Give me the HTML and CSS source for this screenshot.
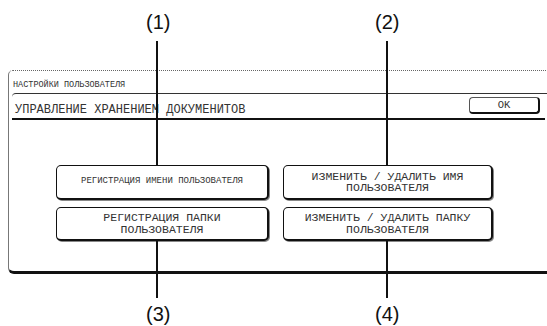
FILE: index.html
```html
<!doctype html>
<html lang="ru">
<head>
    <meta charset="UTF-8">
    <title>Управление хранением документов</title>
    <link rel="stylesheet" href="styles.css">
</head>
<body>
    <div class="figure">
        <div class="panel">
            <div class="panel-title">НАСТРОЙКИ ПОЛЬЗОВАТЕЛЯ</div>
            <div class="panel-body">
                <div class="heading">
                    <span class="heading-text">УПРАВЛЕНИЕ ХРАНЕНИЕМ ДОКУМЕНИТОВ</span>
                    <button class="ok-btn">OK</button>
                </div>
                <div class="keys">
                    <button class="key key-small">РЕГИСТРАЦИЯ ИМЕНИ ПОЛЬЗОВАТЕЛЯ</button>
                    <button class="key">ИЗМЕНИТЬ / УДАЛИТЬ ИМЯ<br>ПОЛЬЗОВАТЕЛЯ</button>
                    <button class="key">РЕГИСТРАЦИЯ ПАПКИ<br>ПОЛЬЗОВАТЕЛЯ</button>
                    <button class="key">ИЗМЕНИТЬ / УДАЛИТЬ ПАПКУ<br>ПОЛЬЗОВАТЕЛЯ</button>
                </div>
            </div>
        </div>

        <!-- выноски -->
        <span class="label label-1">(1)</span>
        <span class="label label-2">(2)</span>
        <span class="label label-3">(3)</span>
        <span class="label label-4">(4)</span>
        <span class="line line-1"></span>
        <span class="line line-2"></span>
        <span class="line line-3"></span>
        <span class="line line-4"></span>
    </div>
</body>
</html>
```

FILE: styles.css
```css
*{
    margin: 0;
    padding: 0;
    box-sizing: border-box;
}
body{
    width: 547px;
    height: 326px;
    overflow: hidden;
    background: #fff;
    color: #333;
    font-family: "Liberation Mono", monospace;
}
.figure{
    position: relative;
    height: 326px;
    padding-top: 70px;
}
.panel{
    margin-left: 8px;
    margin-right: -14px;
    border-top: 1px dotted #666;
    border-left: 1px solid #777;
    border-bottom: 3px solid #111;
    border-radius: 5px 0 0 6px;
}
.panel-title{
    height: 22px;
    padding: 9px 0 0 4px;
    font-size: 8.5px;
    line-height: 10px;
}
.panel-body{
    margin-left: 3px;
    border-top: 1px solid #333;
    border-top-left-radius: 4px;
    padding-bottom: 30px;
}
.heading{
    display: flex;
    justify-content: space-between;
    align-items: flex-start;
    height: 26px;
    margin-right: 16px;
    border-bottom: 2px solid #111;
}
.heading-text{
    padding: 10px 0 0 3px;
    font-size: 12px;
    line-height: 12px;
}
.ok-btn{
    width: 71px;
    height: 17px;
    margin: 3px 5px 0 0;
    background: #fff;
    color: #333;
    font-family: "Liberation Mono", monospace;
    font-size: 10.5px;
    border: 1px solid #555;
    border-right: 2px solid #111;
    border-bottom: 2px solid #111;
    border-radius: 4px;
}
.keys{
    display: grid;
    grid-template-columns: 213px 210px;
    grid-template-rows: 35px 34px;
    column-gap: 14px;
    row-gap: 7px;
    margin: 45px 0 0 44px;
}
.key{
    background: #fff;
    color: #333;
    font-family: "Liberation Mono", monospace;
    font-size: 11.5px;
    line-height: 11.5px;
    border: 1px solid #111;
    border-right: 2px solid #111;
    border-bottom: 2px solid #111;
    border-radius: 5px;
    box-shadow: 1px 1px 0 #888;
}
.key-small{
    font-size: 9px;
}
.label{
    position: absolute;
    top: 10px;
    font-family: "Liberation Sans", Arial, sans-serif;
    font-size: 20px;
    line-height: 24px;
    color: #111;
}
.label-1, .label-3{
    left: 146px;
}
.label-2, .label-4{
    left: 375px;
}
.label-3, .label-4{
    top: 302px;
}
.line{
    position: absolute;
    width: 2px;
    background: #111;
}
.line-1, .line-3{
    left: 156px;
}
.line-2, .line-4{
    left: 386px;
}
.line-1, .line-2{
    top: 41px;
    height: 124px;
}
.line-3, .line-4{
    top: 241px;
    height: 57px;
}
```
